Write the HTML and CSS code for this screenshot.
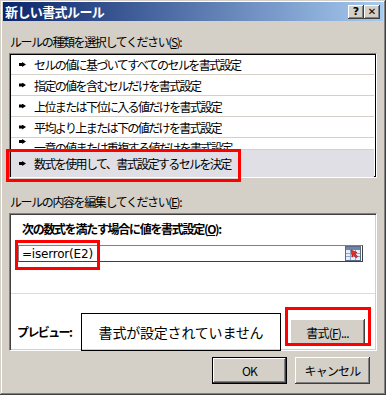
FILE: index.html
```html
<!DOCTYPE html>
<html lang="ja">
<head>
    <meta charset="UTF-8">
    <title>新しい書式ルール</title>
    <link rel="stylesheet" href="styles.css">
</head>
<body>
    <div class="window">
        <div class="titlebar">
            <span class="title">新しい書式ルール</span>
            <div class="title-buttons">
                <span class="tbtn">?</span>
                <span class="tbtn close">✕</span>
            </div>
        </div>

        <div class="content">
            <div class="label label-top">ルールの種類を選択してください(<u>S</u>):</div>
            <div class="rule-list">
                <div class="rule first"><i class="pointer"></i>セルの値に基づいてすべてのセルを書式設定</div>
                <div class="rule"><i class="pointer"></i>指定の値を含むセルだけを書式設定</div>
                <div class="rule"><i class="pointer"></i>上位または下位に入る値だけを書式設定</div>
                <div class="rule"><i class="pointer"></i>平均より上または下の値だけを書式設定</div>
                <div class="rule clipped"><i class="pointer"></i>一意の値または重複する値だけを書式設定</div>
                <div class="rule selected"><i class="pointer"></i>数式を使用して、書式設定するセルを決定</div>
            </div>

            <div class="label label-edit">ルールの内容を編集してください(<u>E</u>):</div>
            <div class="panel">
                <div class="panel-top">
                    <div class="bold-label">次の数式を満たす場合に値を書式設定(<u>O</u>):</div>
                    <div class="formula">
                        <span class="formula-text">=iserror(E2)</span>
                        <svg class="ref-icon" width="16" height="15" viewBox="0 0 16 15">
                            <rect x="0.5" y="0.5" width="15" height="14" fill="#e8eef8" stroke="#5a6b86"/>
                            <rect x="1" y="1" width="14" height="3" fill="#6e84a8"/>
                            <path d="M1 7.5h14M1 10.5h14M5.5 4v10M10.5 4v10" stroke="#8fa6cc" stroke-width="1"/>
                            <path d="M6 4l6 2.5-2.3 1 3 3-1.4 1.4-3-3-1 2.3z" fill="#e0322a" stroke="#8a1410" stroke-width="0.6"/>
                        </svg>
                    </div>
                </div>
                <div class="preview-row">
                    <span class="bold-label preview-label">プレビュー:</span>
                    <div class="preview-box">書式が設定されていません</div>
                    <button class="btn format-btn">書式(<u>F</u>)...</button>
                </div>
            </div>

            <div class="dialog-buttons">
                <button class="btn default">OK</button>
                <button class="btn">キャンセル</button>
            </div>
        </div>

        <div class="mark mark-rule"></div>
        <div class="mark mark-formula"></div>
        <div class="mark mark-format"></div>
    </div>
</body>
</html>
```

FILE: styles.css
```css
body {
    margin: 0;
    font-family: "Noto Sans CJK JP", sans-serif;
    font-size: 12px;
    color: #000;
    background: #d4d0c8;
}

.window {
    position: relative;
    width: 386px;
    height: 395px;
    box-sizing: border-box;
    padding: 2px 3px;
    background: #d4d0c8;
    box-shadow: inset -1px -1px #404040, inset 1px 1px #d4d0c8,
                inset -2px -2px #808080, inset 2px 2px #fff;
    overflow: hidden;
}

.titlebar {
    display: flex;
    justify-content: space-between;
    align-items: center;
    height: 19px;
    padding: 0 3px 0 2px;
    background: linear-gradient(to right, #0a246a, #a6caf0);
}

.title {
    color: #fff;
    font-weight: bold;
    font-size: 13px;
    letter-spacing: -0.6px;
}

.title-buttons {
    display: flex;
    gap: 0;
}

.tbtn {
    width: 16px;
    height: 14px;
    box-sizing: border-box;
    display: flex;
    align-items: center;
    justify-content: center;
    background: #d4d0c8;
    font-family: "DejaVu Sans", sans-serif;
    font-weight: bold;
    font-size: 11px;
    line-height: 1;
    box-shadow: inset -1px -1px #404040, inset 1px 1px #fff,
                inset -2px -2px #808080;
}

.tbtn.close {
    font-size: 10px;
}

.content {
    padding: 0 6px;
}

.label {
    line-height: 14px;
    padding-left: 1px;
    letter-spacing: -1.4px;
}

.label-top {
    margin: 14px 0 4px;
}

.label-edit {
    margin: 17px 0 4px;
}

.rule-list {
    height: 125px;
    box-sizing: border-box;
    border: 1px solid;
    border-color: #808080 #fff #fff #808080;
    background: #fff;
    overflow: hidden;
    box-shadow: inset 1px 1px #000, inset -1px -1px #000;
    padding: 1px 2px 1px 1px;
}

.rule {
    display: flex;
    align-items: center;
    height: 20px;
    border-top: 1px solid #d4d0c8;
    padding-left: 8px;
    letter-spacing: -1.6px;
    white-space: nowrap;
    overflow: hidden;
}

.rule.first {
    height: 19px;
    border-top: none;
}

.rule.clipped {
    height: 10px;
    align-items: flex-start;
    padding-top: 1px;
}

.rule.selected {
    height: 27px;
    background: #dfdfe5;
    border-top: 1px solid #d4d0c8;
}

.pointer {
    width: 7px;
    height: 5px;
    margin-right: 8px;
    flex: none;
    background: #000;
    clip-path: polygon(0 20%, 45% 20%, 45% 0, 100% 50%, 45% 100%, 45% 80%, 0 80%);
}

.panel {
    height: 138px;
    box-sizing: border-box;
    border: 1px solid;
    border-color: #808080 #fff #fff #808080;
    box-shadow: inset 1px 1px #404040, inset -1px -1px #d4d0c8;
    background: #fff;
    padding: 1px;
}

.panel-top {
    height: 71px;
    border-bottom: 1px solid #dcdcdc;
    padding: 7px 12px 0 7px;
}

.bold-label {
    font-weight: bold;
    line-height: 14px;
    letter-spacing: -1.3px;
}

.panel-top .bold-label {
    margin-left: 4px;
}

.formula {
    display: flex;
    align-items: center;
    justify-content: space-between;
    margin-top: 9px;
    height: 17px;
    box-sizing: border-box;
    border: 1px solid;
    border-color: #808080 #404040 #404040 #808080;
    padding: 0 1px 0 3px;
}

.formula-text {
    font-family: "DejaVu Sans", sans-serif;
    font-size: 12px;
    letter-spacing: -0.2px;
}

.preview-row {
    display: flex;
    align-items: center;
    padding: 19px 0 0 6px;
}

.preview-label {
    width: 64px;
    letter-spacing: -1.6px;
}

.preview-box {
    width: 200px;
    height: 38px;
    box-sizing: border-box;
    border: 1px solid #000;
    display: flex;
    align-items: center;
    justify-content: center;
    font-size: 14px;
    letter-spacing: -0.2px;
}

.btn {
    width: 75px;
    height: 27px;
    border: none;
    padding: 0;
    background: #d4d0c8;
    font-family: inherit;
    font-size: 12px;
    color: #000;
    letter-spacing: -0.8px;
    box-shadow: inset -1px -1px #404040, inset 1px 1px #fff,
                inset -2px -2px #808080;
}

.format-btn {
    margin-left: 9px;
}

.btn.default {
    box-shadow: inset 0 0 0 1px #000, inset -2px -2px #404040, inset 2px 2px #fff,
                inset -3px -3px #808080;
}

.dialog-buttons {
    display: flex;
    gap: 8px;
    margin: 6px 0 0 203px;
}

.mark {
    position: absolute;
    border: 3px solid #ff0000;
    box-sizing: border-box;
}

.mark-rule {
    left: 6px;
    top: 149px;
    width: 235px;
    height: 33px;
}

.mark-formula {
    left: 15px;
    top: 240px;
    width: 85px;
    height: 30px;
}

.mark-format {
    left: 285px;
    top: 307px;
    width: 86px;
    height: 39px;
}
```
